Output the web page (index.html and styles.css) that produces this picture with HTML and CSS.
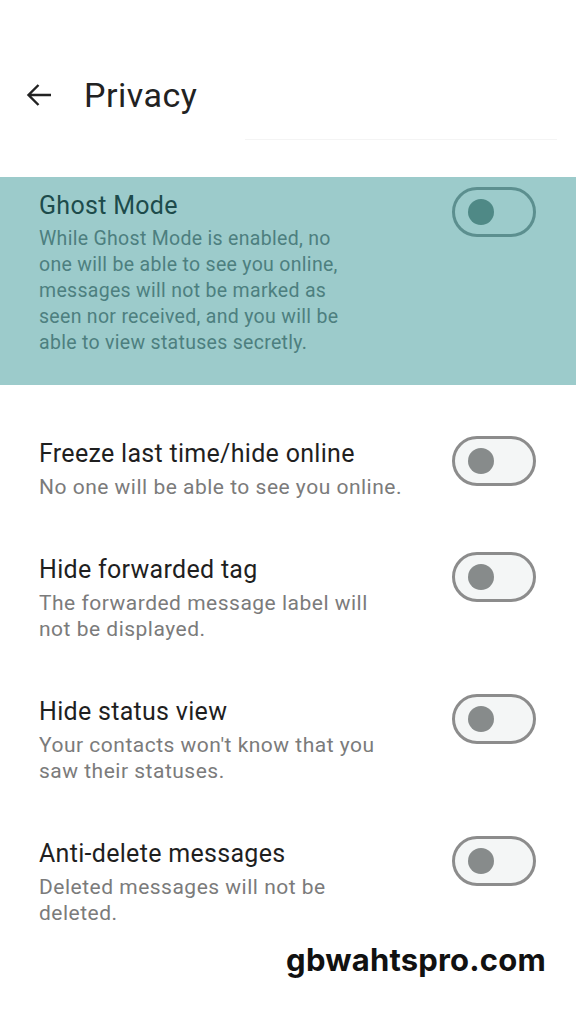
FILE: index.html
```html
<!DOCTYPE html>
<html lang="en">
  <head>
    <meta charset="UTF-8" />
    <meta name="viewport" content="width=device-width, initial-scale=1.0" />
    <title>Privacy</title>
    <link rel="stylesheet" href="styles.css">
  </head>
  <body>
    <div class="screen">
      <div class="topbar">
        <svg class="back" viewBox="0 0 26 24" width="26" height="24">
          <path d="M25 12H2.5M12.5 2L2.5 12l10 10" fill="none" stroke="#222" stroke-width="2.4" />
        </svg>
        <h1>Privacy</h1>
      </div>
      <div class="divider"></div>

      <div class="row ghost">
        <div class="text">
          <h3>Ghost Mode</h3>
          <p>While Ghost Mode is enabled, no one will be able to see you online, messages will not be marked as seen nor received, and you will be able to view statuses secretly.</p>
        </div>
        <span class="toggle"></span>
      </div>

      <div class="settings">
        <div class="row">
          <div class="text">
            <h3>Freeze last time/hide online</h3>
            <p>No one will be able to see you online.</p>
          </div>
          <span class="toggle"></span>
        </div>
        <div class="row">
          <div class="text">
            <h3>Hide forwarded tag</h3>
            <p>The forwarded message label will not be displayed.</p>
          </div>
          <span class="toggle"></span>
        </div>
        <div class="row">
          <div class="text">
            <h3>Hide status view</h3>
            <p>Your contacts won't know that you saw their statuses.</p>
          </div>
          <span class="toggle"></span>
        </div>
        <div class="row">
          <div class="text">
            <h3>Anti-delete messages</h3>
            <p>Deleted messages will not be deleted.</p>
          </div>
          <span class="toggle"></span>
        </div>
      </div>

      <div class="footer">gbwahtspro.com</div>
    </div>
  </body>
</html>
```

FILE: styles.css
```css
* {
  margin: 0;
  padding: 0;
  box-sizing: border-box;
}
body {
  background: #fff;
  font-family: Roboto, "Noto Sans", sans-serif;
}
.screen {
  width: 576px;
  min-height: 1024px;
}
.topbar {
  display: flex;
  align-items: flex-start;
  height: 139px;
  padding: 75px 0 0 26px;
}
.topbar .back {
  margin-top: 8px;
}
.topbar h1 {
  font-size: 34px;
  font-weight: 400;
  letter-spacing: 0.5px;
  line-height: 40px;
  color: #222;
  margin-left: 32px;
}
.divider {
  height: 1px;
  margin-left: 245px;
  width: 312px;
  background: #f4f4f4;
}
.row {
  display: flex;
  justify-content: space-between;
  align-items: flex-start;
  padding: 0 40px 0 39px;
}
.row .text {
  width: 365px;
}
.row h3 {
  font-size: 25px;
  font-weight: 400;
  letter-spacing: 0.3px;
  line-height: 40px;
  color: #1f1f1f;
}
.row p {
  font-size: 21px;
  letter-spacing: 0.5px;
  line-height: 26px;
  color: #7b7b7b;
}
.toggle {
  position: relative;
  flex: none;
  width: 84px;
  height: 50px;
  margin-top: 2px;
  border: 3px solid #8c8c8c;
  border-radius: 25px;
  background: #f4f6f6;
}
.toggle::after {
  content: "";
  position: absolute;
  left: 13px;
  top: 9px;
  width: 26px;
  height: 26px;
  border-radius: 50%;
  background: #878b8b;
}
.ghost {
  margin-top: 37px;
  background: #9ccbcb;
  padding-top: 9px;
  padding-bottom: 29px;
}
.ghost .text {
  width: 325px;
}
.ghost h3 {
  color: #1d4b4b;
}
.ghost p {
  font-size: 19.5px;
  letter-spacing: 0.3px;
  color: #4d7f7f;
}
.ghost .toggle {
  margin-top: 1px;
  background: #9ccbcb;
  border-color: #5c8f8f;
}
.ghost .toggle::after {
  background: #4f8986;
}
.settings {
  display: flex;
  flex-direction: column;
  gap: 50px;
  padding-top: 49px;
}
.footer {
  margin-top: 17px;
  padding-right: 30px;
  text-align: right;
  font-family: Inter, "Liberation Sans", sans-serif;
  font-weight: 700;
  font-size: 31px;
  letter-spacing: 0.2px;
  line-height: 34px;
  color: #111;
}
```
